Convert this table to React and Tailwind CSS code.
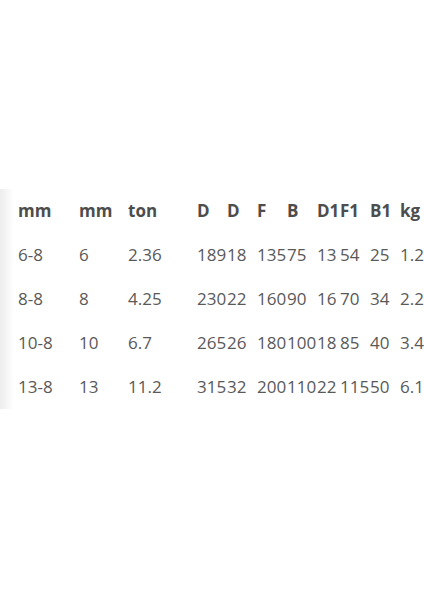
import React from 'react';

const head = ['mm', 'mm', 'ton', 'D', 'D', 'F', 'B', 'D1', 'F1', 'B1', 'kg'];
const rows = [
  ['6-8', '6', '2.36', '189', '18', '135', '75', '13', '54', '25', '1.2'],
  ['8-8', '8', '4.25', '230', '22', '160', '90', '16', '70', '34', '2.2'],
  ['10-8', '10', '6.7', '265', '26', '180', '100', '18', '85', '40', '3.4'],
  ['13-8', '13', '11.2', '315', '32', '200', '110', '22', '115', '50', '6.1'],
];

export default function App() {
  return (
    <div className="w-[424px] h-[600px] bg-white overflow-hidden pt-[189px] font-['Open_Sans',sans-serif]">
      <div className="relative w-full overflow-hidden">
        {/* left scroll shadow */}
        <div className="absolute left-0 top-0 bottom-0 w-[14px] bg-gradient-to-r from-[#ededed] to-white" />
        <div className="relative pl-[18px] grid grid-cols-[61px_49px_69px_30px_30px_30px_30px_23px_30px_30px_40px] text-[17px] whitespace-nowrap">
          {head.map((h, i) => (
            <div key={'h' + i} className="h-[44px] flex items-center font-bold text-[#4d4d4d]">
              {h}
            </div>
          ))}
          {rows.map((r, ri) =>
            r.map((c, ci) => (
              <div key={ri + '-' + ci} className="h-[44px] flex items-center text-[#595959]">
                {c}
              </div>
            ))
          )}
        </div>
      </div>
    </div>
  );
}
